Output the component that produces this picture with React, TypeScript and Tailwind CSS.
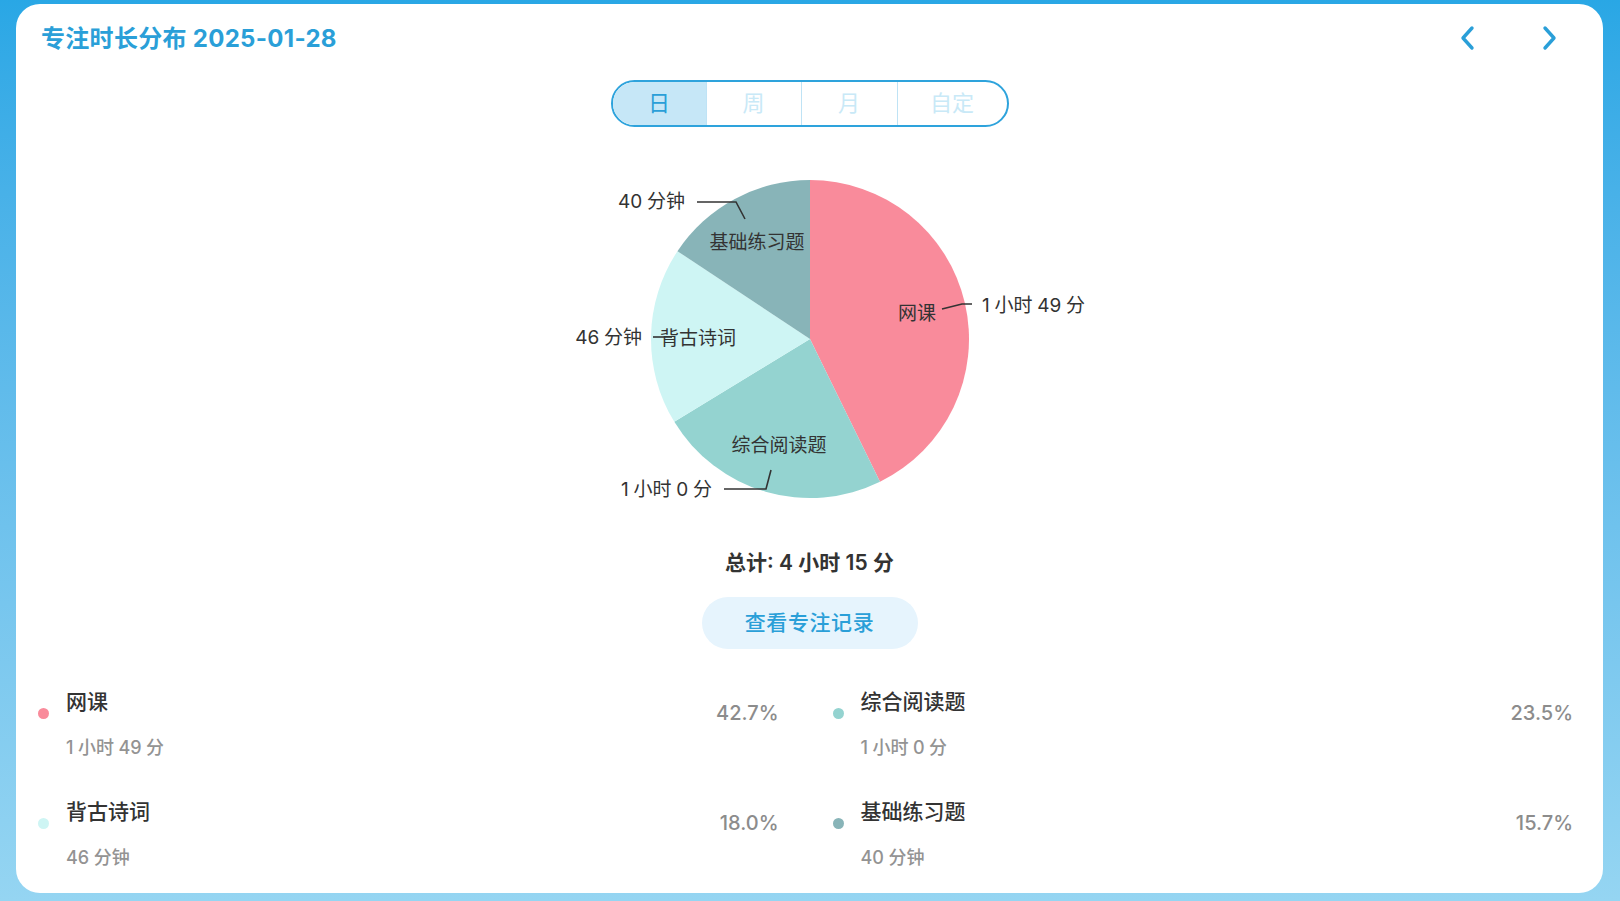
import React from "react";

const sp = (s: string, gap = "\u2009") =>
  s
    .replace(/(\d)(?=[\u4e00-\u9fff])/g, "$1" + gap)
    .replace(/([\u4e00-\u9fff])(?=\d)/g, "$1" + gap);

const slices = [
  { name: "网课", min: 109, color: "#f98b9b" },
  { name: "综合阅读题", min: 60, color: "#94d3d0" },
  { name: "背古诗词", min: 46, color: "#cef5f4" },
  { name: "基础练习题", min: 40, color: "#88b4b8" },
];

const legend = [
  { name: "网课", time: "1小时49分", pct: "42.7%", dot: "bg-[#f98b9b]" },
  { name: "综合阅读题", time: "1小时0分", pct: "23.5%", dot: "bg-[#94d3d0]" },
  { name: "背古诗词", time: "46分钟", pct: "18.0%", dot: "bg-[#cef5f4]" },
  { name: "基础练习题", time: "40分钟", pct: "15.7%", dot: "bg-[#88b4b8]" },
];

function Pie() {
  const cx = 300;
  const cy = 189;
  const r = 159;
  const total = slices.reduce((a, s) => a + s.min, 0);
  let acc = 0;
  const pt = (deg: number) => {
    const a = (deg * Math.PI) / 180;
    return [cx + r * Math.sin(a), cy - r * Math.cos(a)];
  };
  const paths = slices.map((s) => {
    const a0 = (acc / total) * 360;
    acc += s.min;
    const a1 = (acc / total) * 360;
    const [x0, y0] = pt(a0);
    const [x1, y1] = pt(a1);
    const large = a1 - a0 > 180 ? 1 : 0;
    return (
      <path
        key={s.name}
        d={`M${cx},${cy} L${x0},${y0} A${r},${r} 0 ${large} 1 ${x1},${y1} Z`}
        fill={s.color}
      />
    );
  });
  const tc = "#333333";
  return (
    <svg width="600" height="380" viewBox="0 0 600 380" className="block">
      {paths}
      <g fill={tc} fontSize="19" style={{ fontFamily: "Inter, 'Noto Sans CJK SC', sans-serif" }}>
        <text x="175" y="51" textAnchor="end" dominantBaseline="central">{sp("40分钟", "\u2005")}</text>
        <text x="247" y="92" textAnchor="middle" dominantBaseline="central">基础练习题</text>
        <text x="407" y="163" textAnchor="middle" dominantBaseline="central">网课</text>
        <text x="472" y="155" textAnchor="start" dominantBaseline="central">{sp("1小时49分", "\u2005")}</text>
        <text x="132" y="187" textAnchor="end" dominantBaseline="central">{sp("46分钟", "\u2005")}</text>
        <text x="188" y="188" textAnchor="middle" dominantBaseline="central">背古诗词</text>
        <text x="269" y="295" textAnchor="middle" dominantBaseline="central">综合阅读题</text>
        <text x="202" y="339" textAnchor="end" dominantBaseline="central">{sp("1小时0分", "\u2005")}</text>
      </g>
      <g stroke={tc} strokeWidth="1.6" fill="none">
        <polyline points="187,52 226,52 235,69" />
        <polyline points="432,159 452,154 462,154" />
        <polyline points="143,187 162,187" />
        <polyline points="214,339 256,339 261,320" />
      </g>
    </svg>
  );
}

function Chevron({ dir }: { dir: "left" | "right" }) {
  return (
    <svg width="24" height="26" viewBox="0 0 24 26" fill="none">
      <path
        d={dir === "left" ? "M16 3 L7 13 L16 23" : "M8 3 L17 13 L8 23"}
        stroke="#2a9fd8"
        strokeWidth="3.4"
        strokeLinecap="round"
        strokeLinejoin="round"
      />
    </svg>
  );
}

export default function App() {
  return (
    <div className="w-full h-[901px] bg-gradient-to-b from-[#29a7e5] to-[#95d5f2] pt-[4px] pl-[16px] pr-[17px] pb-[8px] font-['Inter','Noto_Sans_CJK_SC',sans-serif]">
      <div className="h-full bg-white rounded-[24px] flex flex-col">
        <div className="h-[68px] flex items-center justify-between pl-[25px] pr-[34px]">
          <div className="text-[24px] font-bold text-[#2a9fd8] tracking-[0.3px] pt-[2px]">
            专注时长分布 2025-01-28
          </div>
          <div className="flex items-center gap-[41px]">
            <button className="w-[40px] h-[40px] flex items-center justify-center">
              <Chevron dir="left" />
            </button>
            <button className="w-[40px] h-[40px] flex items-center justify-center">
              <Chevron dir="right" />
            </button>
          </div>
        </div>

        <div className="mt-[8px] flex justify-center">
          <div className="flex h-[47px] w-[398px] rounded-full border-2 border-[#2ea3dc] overflow-hidden text-[22px]">
            <div className="w-[93px] bg-[#c6e7f7] text-[#2a9fd8] flex items-center justify-center">日</div>
            <div className="w-[95px] border-l border-[#bfe3f5] text-[#c9e9f7] flex items-center justify-center">周</div>
            <div className="w-[96px] border-l border-[#bfe3f5] text-[#c9e9f7] flex items-center justify-center">月</div>
            <div className="flex-1 border-l border-[#bfe3f5] text-[#c9e9f7] flex items-center justify-center">自定</div>
          </div>
        </div>

        <div className="mt-[23px] flex justify-center">
          <Pie />
        </div>

        <div className="mt-[19px] text-center text-[21px] leading-[28px] font-semibold text-[#333333]">
          {sp("总计: 4小时15分", "\u2005")}
        </div>

        <div className="mt-[20px] flex justify-center">
          <button className="w-[216px] h-[52px] rounded-full bg-[#e6f4fd] text-[#2a9fd8] text-[21px] font-medium tracking-[0.6px]">
            查看专注记录
          </button>
        </div>

        <div className="mt-[39px] pl-[22px] pr-[30px] grid grid-cols-2 gap-x-[54px] gap-y-[38px]">
          {legend.map((l) => (
            <div key={l.name} className="flex items-start">
              <div className={`w-[11px] h-[11px] rounded-full mt-[20px] ${l.dot}`} />
              <div className="ml-[17px] flex flex-col flex-1">
                <div className="text-[21px] leading-[28px] font-medium text-[#333333]">{l.name}</div>
                <div className="mt-[20px] text-[18px] leading-[24px] font-medium text-[#939393]">{sp(l.time, "\u2005")}</div>
              </div>
              <div className="mt-[12px] text-[20px] leading-[26px] font-medium text-[#8c8c8c]">{l.pct}</div>
            </div>
          ))}
        </div>
      </div>
    </div>
  );
}
